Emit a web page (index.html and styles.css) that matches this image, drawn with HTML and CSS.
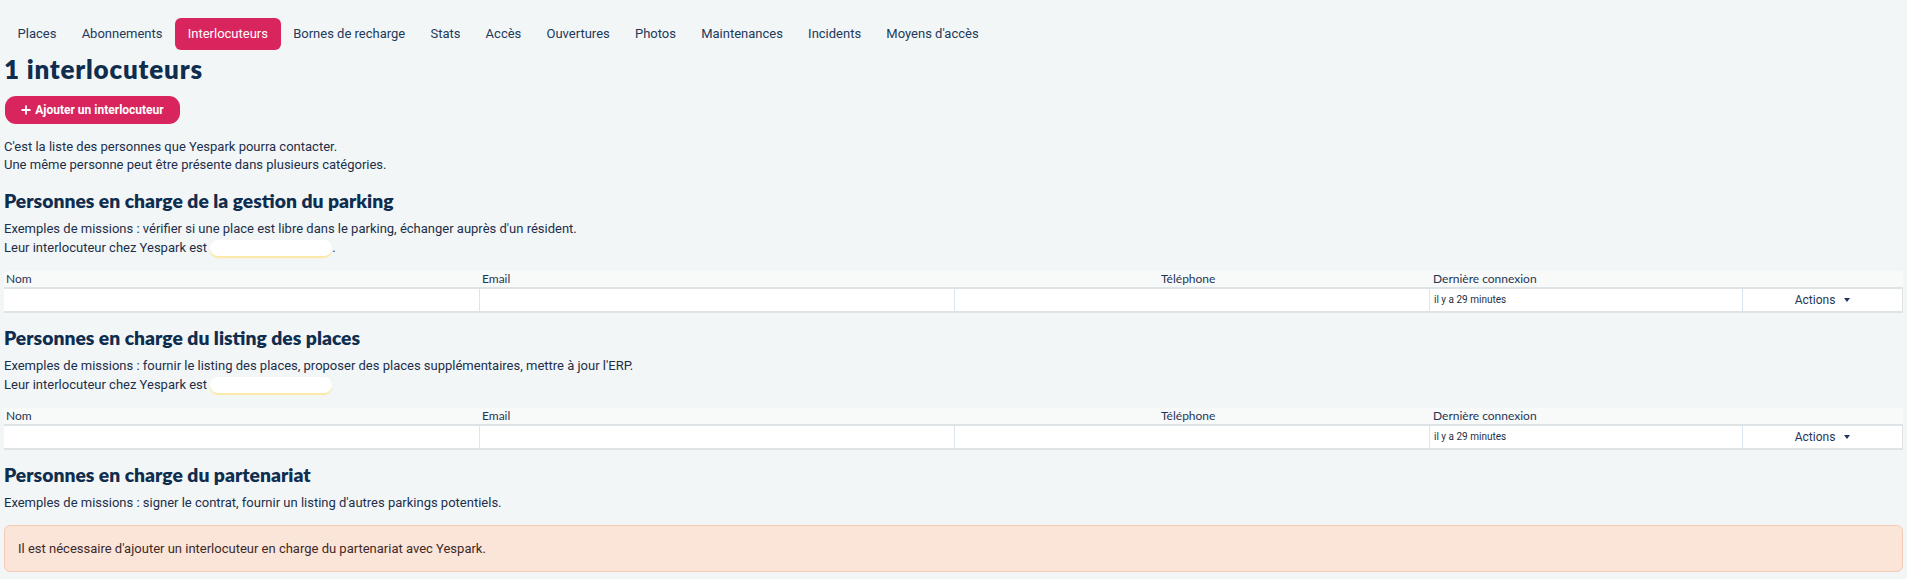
FILE: index.html
```html
<!DOCTYPE html>
<html lang="fr">
<head>
<meta charset="utf-8">
<title>Interlocuteurs</title>
<link rel="stylesheet" href="styles.css">
</head>
<body>
<div class="page">
  <nav class="tabs">
    <a class="tab">Places</a>
    <a class="tab">Abonnements</a>
    <a class="tab active">Interlocuteurs</a>
    <a class="tab">Bornes de recharge</a>
    <a class="tab">Stats</a>
    <a class="tab">Accès</a>
    <a class="tab">Ouvertures</a>
    <a class="tab">Photos</a>
    <a class="tab">Maintenances</a>
    <a class="tab">Incidents</a>
    <a class="tab">Moyens d'accès</a>
  </nav>

  <h1 class="title">1 interlocuteurs</h1>

  <button class="btn-add"><svg class="plus" viewBox="0 0 10 10" width="10" height="10"><path d="M5 0.5v9M0.5 5h9" stroke="#fff" stroke-width="1.8"/></svg>Ajouter un interlocuteur</button>

  <p class="intro">C'est la liste des personnes que Yespark pourra contacter.<br>Une même personne peut être présente dans plusieurs catégories.</p>

  <section class="group">
    <h2 class="group-title">Personnes en charge de la gestion du parking</h2>
    <p class="desc">Exemples de missions : vérifier si une place est libre dans le parking, échanger auprès d'un résident.<br>Leur interlocuteur chez Yespark est <span class="redacted"></span>.</p>
    <div class="table">
      <div class="thead">
        <div class="th">Nom</div>
        <div class="th">Email</div>
        <div class="th">Téléphone</div>
        <div class="th">Dernière connexion</div>
      </div>
      <div class="trow">
        <div class="td"></div>
        <div class="td"></div>
        <div class="td"></div>
        <div class="td small">il y a 29 minutes</div>
        <div class="td actions">Actions <span class="caret"></span></div>
      </div>
    </div>
  </section>

  <section class="group">
    <h2 class="group-title">Personnes en charge du listing des places</h2>
    <p class="desc">Exemples de missions : fournir le listing des places, proposer des places supplémentaires, mettre à jour l'ERP.<br>Leur interlocuteur chez Yespark est <span class="redacted"></span></p>
    <div class="table">
      <div class="thead">
        <div class="th">Nom</div>
        <div class="th">Email</div>
        <div class="th">Téléphone</div>
        <div class="th">Dernière connexion</div>
      </div>
      <div class="trow">
        <div class="td"></div>
        <div class="td"></div>
        <div class="td"></div>
        <div class="td small">il y a 29 minutes</div>
        <div class="td actions">Actions <span class="caret"></span></div>
      </div>
    </div>
  </section>

  <section class="group">
    <h2 class="group-title">Personnes en charge du partenariat</h2>
    <p class="desc">Exemples de missions : signer le contrat, fournir un listing d'autres parkings potentiels.</p>
    <div class="alert">Il est nécessaire d'ajouter un interlocuteur en charge du partenariat avec Yespark.</div>
  </section>
</div>
</body>
</html>
```

FILE: styles.css
```css
* { box-sizing: border-box; }
html, body { margin: 0; padding: 0; }
body {
  background: #f3f6f7;
  font-family: Roboto, "Liberation Sans", sans-serif;
  color: #1c2f4a;
  font-size: 13px;
}
.page { padding: 18px 4px 0 4px; }

.tabs { display: flex; align-items: center; margin-left: 1px; }
.tab {
  display: block;
  height: 32px;
  line-height: 32px;
  padding: 0 12.6px;
  font-size: 13px;
  color: #21395a;
  border-radius: 6px;
}
.tab.active { background: #d8255e; color: #fff; }

.title {
  font-family: Lato, "Open Sans", sans-serif;
  font-weight: 800;
  font-size: 26px;
  letter-spacing: 0.8px;
  line-height: 28px;
  color: #0f2e4f;
  margin: 5px 0 0 0;
}

.btn-add {
  display: flex;
  align-items: center;
  gap: 4px;
  margin: 13px 0 0 1px;
  height: 28px;
  width: 175px;
  justify-content: center;
  border: none;
  border-radius: 11px;
  background: #d8255e;
  color: #fff;
  font-family: Roboto, sans-serif;
  font-weight: 700;
  font-size: 12px;
  padding: 0;
}
.plus { display: block; }

.intro { margin: 14px 0 0 0; line-height: 18px; font-size: 13px; }

.group-title {
  font-family: Lato, "Open Sans", sans-serif;
  font-weight: 800;
  font-size: 19.3px;
  line-height: 24px;
  color: #0f2e4f;
  margin: 15px 0 0 0;
}
.group + .group .group-title { margin-top: 13px; }
.desc { margin: 6px 0 0 0; line-height: 19px; font-size: 13px; }

.redacted {
  display: inline-block;
  width: 122px;
  height: 16px;
  vertical-align: -4px;
  background: #fff;
  border-radius: 8px;
  box-shadow: 0 2px 1px #fbe9a6;
}

.table { margin-top: 14px; }
.thead {
  display: grid;
  grid-template-columns: 474px 681px 265px 1fr;
  background: #f8f9f9;
  height: 18px;
  border-bottom: 2px solid #dee3e6;
  font-family: Lato, "Open Sans", sans-serif;
  font-size: 12px;
  color: #1f3656;
}
.th { padding: 0 0 0 2px; line-height: 16px; }
.thead .th:nth-child(2) { padding-left: 4px; }
.thead .th:nth-child(4) { padding-left: 9px; }

.trow {
  display: grid;
  grid-template-columns: 475px 475px 475px 313px 1fr;
  background: #fff;
  height: 24px;
  border-bottom: 2px solid #dee3e6;
  border-right: 1px solid #dee3e6;
}
.td { border-left: 1px solid #d9e6f0; height: 22px; line-height: 22px; padding-left: 4px; }
.td:first-child { border-left: none; }
.td.small { font-size: 10px; color: #1f2f45; }
.td.actions { text-align: center; font-size: 12px; color: #1f3656; padding-left: 0; }
.caret {
  display: inline-block;
  width: 0; height: 0;
  border-left: 3.5px solid transparent;
  border-right: 3.5px solid transparent;
  border-top: 4px solid #1f3656;
  vertical-align: 2px;
  margin-left: 6px;
}

.alert {
  margin-top: 13px;
  height: 47px;
  border: 1px solid #f4cbb4;
  background: #fbe4d8;
  border-radius: 6px;
  padding: 0 13px;
  line-height: 45px;
  font-size: 13px;
  color: #3b2a28;
}
```
